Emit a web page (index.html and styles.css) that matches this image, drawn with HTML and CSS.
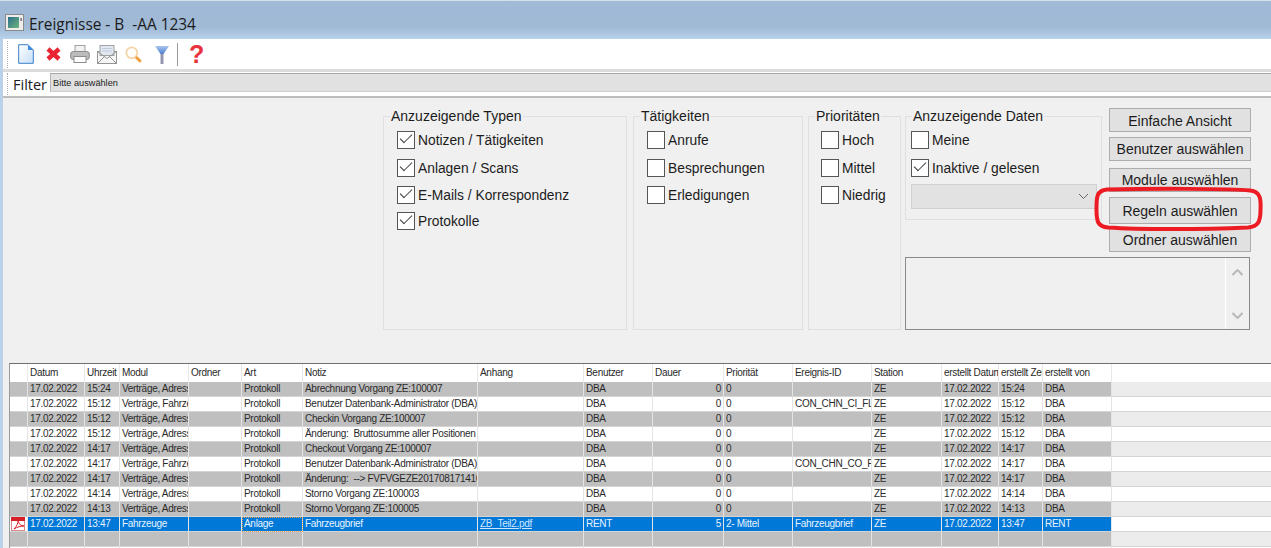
FILE: index.html
```html
<!DOCTYPE html>
<html lang="de">
<head>
<meta charset="utf-8">
<title>Ereignisse</title>
<link rel="stylesheet" href="styles.css">
</head>
<body>
<div class="app">
  <header class="titlebar">
    <svg class="title-icon" width="19" height="17" viewBox="0 0 19 17"><defs><linearGradient id="tg" x1="0" y1="0" x2="1" y2="1"><stop offset="0" stop-color="#2b6f8c"/><stop offset="1" stop-color="#6fb57a"/></linearGradient></defs><rect x=".5" y=".5" width="18" height="16" fill="#ececec" stroke="#8a8a8a"/><rect x="3" y="3" width="11" height="11" fill="url(#tg)"/><rect x="15.500" y="4" width="1.200" height="3" fill="#556"/></svg>
    <h1 class="title">Ereignisse - B  -AA 1234</h1>
  </header>
  <div class="content">
    <div class="toolbar">
      <span class="grip"></span>
      <svg class="ic-doc" width="16" height="20" viewBox="0 0 16 20"><defs><linearGradient id="dg" x1="0" y1="0" x2="1" y2="1"><stop offset="0" stop-color="#fff"/><stop offset="1" stop-color="#c6def6"/></linearGradient></defs><path d="M.7.7H10L15.3 6V19.3H.7Z" fill="url(#dg)" stroke="#3a80c8"/><path d="M10 .7V6H15.3Z" fill="#3d8ae0"/></svg>
      <svg class="ic-x" width="15" height="14" viewBox="0 0 15 14"><path d="M2 2L13 12M13 2L2 12" stroke="#ea2430" stroke-width="4.400" fill="none"/></svg>
      <svg class="ic-print" width="20" height="18" viewBox="0 0 20 18"><rect x="5" y=".5" width="10" height="8" fill="#f2f2f2" stroke="#a0a0a0"/><rect x=".7" y="6.500" width="18.600" height="8" rx="2.500" fill="#bcbcbc" stroke="#8c8c8c"/><rect x="4" y="11.500" width="12" height="6" fill="#fff" stroke="#8c8c8c"/></svg>
      <svg class="ic-mail" width="20" height="19" viewBox="0 0 20 19"><rect x=".5" y="6.500" width="19" height="12" fill="#f6f6f6" stroke="#959595"/><rect x="3" y=".5" width="14" height="10" fill="#e2e8f1" stroke="#a2a2a2"/><path d="M5 3.500H15M5 6H15" stroke="#c0cbda"/><path d="M.5 6.500L10 13.500L19.500 6.500M.5 18.500L7.500 11.500M19.500 18.500L12.500 11.500" stroke="#959595" fill="none"/></svg>
      <svg class="ic-mag" width="17" height="17" viewBox="0 0 17 17"><circle cx="6.800" cy="6.800" r="5.500" fill="#fffefb" stroke="#f4d5a8" stroke-width="1.800"/><path d="M11 11L15.800 15.800" stroke="#ec9f3c" stroke-width="3"/></svg>
      <svg class="ic-fun" width="14" height="19" viewBox="0 0 14 19"><defs><linearGradient id="fg" x1="0" y1="0" x2="0" y2="1"><stop offset="0" stop-color="#a9c6ee"/><stop offset="1" stop-color="#4f7fcf"/></linearGradient></defs><path d="M5.500 8H8.500V19H5.500Z" fill="#9497ad"/><path d="M0 1H14L8.500 9H5.500Z" fill="url(#fg)"/></svg>
      <span class="tool-sep"></span>
      <span class="ic-help">?</span>
    </div>
    <div class="filterbar">
      <span class="grip grip-short"></span>
      <span class="filter-label">Filter</span>
      <div class="filter-combo">Bitte auswählen</div>
    </div>
    <main class="panel">
      <fieldset class="group g-types">
        <legend>Anzuzeigende Typen</legend>
        <div class="checks">
          <label class="check"><span class="box on"></span>Notizen / Tätigkeiten</label>
          <label class="check"><span class="box on"></span>Anlagen / Scans</label>
          <label class="check"><span class="box on"></span>E-Mails / Korrespondenz</label>
          <label class="check"><span class="box on"></span>Protokolle</label>
        </div>
      </fieldset>
      <fieldset class="group g-tasks">
        <legend>Tätigkeiten</legend>
        <div class="checks">
          <label class="check"><span class="box"></span>Anrufe</label>
          <label class="check"><span class="box"></span>Besprechungen</label>
          <label class="check"><span class="box"></span>Erledigungen</label>
        </div>
      </fieldset>
      <fieldset class="group g-prio">
        <legend>Prioritäten</legend>
        <div class="checks">
          <label class="check"><span class="box"></span>Hoch</label>
          <label class="check"><span class="box"></span>Mittel</label>
          <label class="check"><span class="box"></span>Niedrig</label>
        </div>
      </fieldset>
      <div class="right">
        <div class="right-top">
          <fieldset class="group g-data">
            <legend>Anzuzeigende Daten</legend>
            <div class="checks">
              <label class="check"><span class="box"></span>Meine</label>
              <label class="check"><span class="box on"></span>Inaktive / gelesen</label>
            </div>
            <div class="select"><svg width="11" height="7" viewBox="0 0 11 7"><path d="M1 1L5.500 5.500L10 1" stroke="#666" fill="none"/></svg></div>
          </fieldset>
          <div class="buttons">
            <button class="btn b1">Einfache Ansicht</button>
            <button class="btn b2">Benutzer auswählen</button>
            <button class="btn b3">Module auswählen</button>
            <button class="btn b4">Regeln auswählen</button>
            <button class="btn b5">Ordner auswählen</button>
            <svg class="oval" width="172" height="46" viewBox="0 0 172 46"><path d="M14 3.500C57 2.500 137 2.500 157 4.500C168 5.500 168 14 167.500 24C167.500 36 165 40.500 155 41.500C107 43.500 47 43.500 15 41.500C5 40.500 3.500 36 3.500 24C3.500 12 3 4.500 14 3.500Z" fill="none" stroke="#ed1c24" stroke-width="4"/></svg>
          </div>
        </div>
        <div class="memo">
          <div class="memo-scroll">
            <svg width="11" height="7" viewBox="0 0 11 7"><path d="M.5 6L5.500 1L10.500 6" stroke="#b8b8b8" stroke-width="2" fill="none"/></svg>
            <svg width="11" height="7" viewBox="0 0 11 7"><path d="M.5 1L5.500 6L10.500 1" stroke="#b8b8b8" stroke-width="2" fill="none"/></svg>
          </div>
        </div>
      </div>
    </main>
    <div class="grid-wrap">
      <table class="grid">
        <colgroup>
          <col class="w18"><col class="w57"><col class="w35"><col class="w69"><col class="w53"><col class="w61"><col class="w175"><col class="w106"><col class="w69"><col class="w71"><col class="w69"><col class="w79"><col class="w70"><col class="w57"><col class="w44"><col class="w69"><col>
        </colgroup>
        <thead>
          <tr><th></th><th>Datum</th><th>Uhrzeit</th><th>Modul</th><th>Ordner</th><th>Art</th><th>Notiz</th><th>Anhang</th><th>Benutzer</th><th>Dauer</th><th>Priorität</th><th>Ereignis-ID</th><th>Station</th><th>erstellt Datum</th><th>erstellt Zeit</th><th>erstellt von</th><th></th></tr>
        </thead>
        <tbody>
          <tr class="dark"><td></td><td>17.02.2022</td><td>15:24</td><td>Verträge, Adressen</td><td></td><td>Protokoll</td><td>Abrechnung Vorgang ZE:100007</td><td></td><td>DBA</td><td class="num">0</td><td>0</td><td></td><td>ZE</td><td>17.02.2022</td><td>15:24</td><td>DBA</td><td class="fill"></td></tr>
          <tr class="light"><td></td><td>17.02.2022</td><td>15:12</td><td>Verträge, Fahrzeuge</td><td></td><td>Protokoll</td><td>Benutzer Datenbank-Administrator (DBA) hat</td><td></td><td>DBA</td><td class="num">0</td><td>0</td><td>CON_CHN_CI_FL</td><td>ZE</td><td>17.02.2022</td><td>15:12</td><td>DBA</td><td class="fill"></td></tr>
          <tr class="dark"><td></td><td>17.02.2022</td><td>15:12</td><td>Verträge, Adressen</td><td></td><td>Protokoll</td><td>Checkin Vorgang ZE:100007</td><td></td><td>DBA</td><td class="num">0</td><td>0</td><td></td><td>ZE</td><td>17.02.2022</td><td>15:12</td><td>DBA</td><td class="fill"></td></tr>
          <tr class="light"><td></td><td>17.02.2022</td><td>15:12</td><td>Verträge, Adressen</td><td></td><td>Protokoll</td><td>Änderung:  Bruttosumme aller Positionen und</td><td></td><td>DBA</td><td class="num">0</td><td>0</td><td></td><td>ZE</td><td>17.02.2022</td><td>15:12</td><td>DBA</td><td class="fill"></td></tr>
          <tr class="dark"><td></td><td>17.02.2022</td><td>14:17</td><td>Verträge, Adressen</td><td></td><td>Protokoll</td><td>Checkout Vorgang ZE:100007</td><td></td><td>DBA</td><td class="num">0</td><td>0</td><td></td><td>ZE</td><td>17.02.2022</td><td>14:17</td><td>DBA</td><td class="fill"></td></tr>
          <tr class="light"><td></td><td>17.02.2022</td><td>14:17</td><td>Verträge, Fahrzeuge</td><td></td><td>Protokoll</td><td>Benutzer Datenbank-Administrator (DBA) hat</td><td></td><td>DBA</td><td class="num">0</td><td>0</td><td>CON_CHN_CO_F</td><td>ZE</td><td>17.02.2022</td><td>14:17</td><td>DBA</td><td class="fill"></td></tr>
          <tr class="dark"><td></td><td>17.02.2022</td><td>14:17</td><td>Verträge, Adressen</td><td></td><td>Protokoll</td><td>Änderung:  --&gt; FVFVGEZE20170817141612</td><td></td><td>DBA</td><td class="num">0</td><td>0</td><td></td><td>ZE</td><td>17.02.2022</td><td>14:17</td><td>DBA</td><td class="fill"></td></tr>
          <tr class="light"><td></td><td>17.02.2022</td><td>14:14</td><td>Verträge, Adressen</td><td></td><td>Protokoll</td><td>Storno Vorgang ZE:100003</td><td></td><td>DBA</td><td class="num">0</td><td>0</td><td></td><td>ZE</td><td>17.02.2022</td><td>14:14</td><td>DBA</td><td class="fill"></td></tr>
          <tr class="dark"><td></td><td>17.02.2022</td><td>14:13</td><td>Verträge, Adressen</td><td></td><td>Protokoll</td><td>Storno Vorgang ZE:100005</td><td></td><td>DBA</td><td class="num">0</td><td>0</td><td></td><td>ZE</td><td>17.02.2022</td><td>14:13</td><td>DBA</td><td class="fill"></td></tr>
          <tr class="selected"><td class="rowhead"><svg class="pdf" width="15" height="14" viewBox="0 0 15 14"><rect x=".5" y=".5" width="13" height="13" fill="#fff" stroke="#d88"/><rect x="0" y="0" width="14" height="4" fill="#d8202a"/><path d="M3 12C6 9 7 6 7 4C8 7 10 9 13 9C10 9 6 10 3 12Z" fill="none" stroke="#d8202a"/></svg></td><td>17.02.2022</td><td>13:47</td><td>Fahrzeuge</td><td></td><td class="focus">Anlage</td><td>Fahrzeugbrief</td><td class="link">ZB_Teil2.pdf</td><td>RENT</td><td class="num">5</td><td>2- Mittel</td><td>Fahrzeugbrief</td><td>ZE</td><td>17.02.2022</td><td>13:47</td><td>RENT</td><td class="fill"></td></tr>
          <tr class="dark"><td></td><td></td><td></td><td></td><td></td><td></td><td></td><td></td><td></td><td></td><td></td><td></td><td></td><td></td><td></td><td></td><td class="fill"></td></tr>
          <tr class="light"><td></td><td></td><td></td><td></td><td></td><td></td><td></td><td></td><td></td><td></td><td></td><td></td><td></td><td></td><td></td><td></td><td class="fill"></td></tr>
        </tbody>
      </table>
    </div>
  </div>
</div>
</body>
</html>
```
FILE: styles.css
```css
html, body { margin: 0; padding: 0; height: 548px; overflow: hidden; background: #f0f0f0; }
body { font-family: "Liberation Sans", Arial, sans-serif; color: #1c1c1c; }
.app { display: flex; flex-direction: column; height: 548px; overflow: hidden; }

.titlebar { height: 39px; box-sizing: border-box; border-top: 1px solid #d6e0ec; background: linear-gradient(#a0bad7 0, #a0b9d5 70%, #bad3ec 100%); display: flex; align-items: flex-end; padding: 0 0 8px 5px; }
.title-icon { display: block; }
.title { margin: 0 0 -3px 5px; font: 400 15.400px/18px "Open Sans", sans-serif; color: #1b1b1b; white-space: pre; }

.content { flex: 1; border-left: 3px solid #b9d2ea; display: flex; flex-direction: column; min-height: 0; }

.toolbar { height: 33px; box-sizing: border-box; background: #fff; border-bottom: 3px solid #dcdcdc; display: flex; align-items: center; }
.grip { width: 1px; height: 27px; margin-left: 4px; border-left: 1px dotted #aaa; }
.grip-short { height: 22px; }
.toolbar svg { display: block; flex: none; }
.ic-doc { margin-left: 9px; margin-top: -1px; }
.ic-x { margin-left: 12px; }
.ic-print { margin-left: 9px; }
.ic-mail { margin-left: 7px; }
.ic-mag { margin-left: 8px; }
.ic-fun { margin-left: 13px; }
.tool-sep { width: 1px; height: 23px; margin-left: 8px; background: #9a9a9a; }
.ic-help { margin-left: 11px; font: 700 25px/24px "Liberation Sans", sans-serif; color: #e8323e; }

.filterbar { height: 26px; box-sizing: border-box; background: #fff; border-bottom: 2px solid #bdbdbd; display: flex; align-items: flex-start; padding-top: 1px; }
.filter-label { margin-left: 4px; font: 400 14.500px/24px "Open Sans", sans-serif; width: 37px; }
.filter-combo { flex: 1; height: 19px; box-sizing: border-box; background: #e1e1e1; border-top: 1px solid #a8a8a8; border-bottom: 1px solid #cdcdcd; border-left: 1px solid #b4b4b4; font-size: 9.200px; line-height: 18px; padding-left: 2px; }

.panel { height: 265px; box-sizing: border-box; padding: 10px 0 0 380px; display: flex; align-items: flex-start; flex: none; }
.group { margin: 0; padding: 0; border: 1px solid #dfdfdf; box-sizing: border-box; height: 222px; min-width: 0; }
.group legend { margin-left: 6px; padding: 0 1px; font-size: 14px; line-height: 16px; height: 16px; }
.g-types { width: 244px; }
.g-tasks { width: 170px; margin-left: 6px; }
.g-prio { width: 93px; margin-left: 5px; }
.right { margin-left: 4px; width: 346px; }
.right-top { display: flex; align-items: flex-start; }
.g-data { width: 197px; height: 112px; }

.checks { display: flex; flex-direction: column; gap: 8px; padding: 7px 0 0 13px; }
.g-prio .checks { padding-left: 12px; }
.g-data .checks { padding-left: 5px; }
.check { display: flex; align-items: flex-start; height: 18px; font-size: 13.800px; line-height: 20px; white-space: nowrap; }
.check:nth-child(1) { margin-bottom: 2px; }
.check:nth-child(2) { margin-bottom: 1px; }
.box { width: 18px; height: 18px; box-sizing: border-box; border: 1px solid #555; background: #fff; margin-right: 3px; flex: none; position: relative; }
.box.on::after { content: ""; position: absolute; left: 3px; top: 2px; width: 9px; height: 5px; border-left: 1.400px solid #444; border-bottom: 1.400px solid #444; transform: rotate(-45deg) scaleX(1.200); }
.select { margin: 6px 0 0 5px; width: 186px; height: 25px; box-sizing: border-box; background: #e2e2e2; border: 1px solid #d0d0d0; display: flex; align-items: center; justify-content: flex-end; padding-right: 7px; }

.buttons { position: relative; margin-left: 7px; width: 142px; height: 144px; flex: none; display: flex; flex-direction: column; }
.btn { display: block; width: 142px; height: 24px; box-sizing: border-box; background: #e1e1e1; border: 1px solid #adadad; border-radius: 0; padding: 0; font: 14px/20px "Liberation Sans", sans-serif; color: #1c1c1c; }
.b1 { padding-top: 2px; }
.b2 { margin-top: 5px; }
.b3 { margin-top: 7px; }
.b4 { margin-top: 5px; height: 27px; }
.b5 { margin-top: 4px; }
.oval { position: absolute; left: -16px; top: 78px; }

.memo { margin-top: 5px; width: 345px; height: 73px; box-sizing: border-box; border: 1px solid #8a8a8a; background: #f0f0f0; display: flex; justify-content: flex-end; }
.memo-scroll { width: 24px; border-left: 1px solid #fff; display: flex; flex-direction: column; justify-content: space-between; align-items: center; padding: 11px 0 10px; box-sizing: border-box; }
.memo-scroll svg { display: block; }

.grid-wrap { margin-left: 6px; border-top: 1px solid #6f6f6f; border-left: 1px solid #9a9a9a; background: #fff; flex: 1; min-height: 0; overflow: hidden; }
.grid { width: 100%; table-layout: fixed; border-collapse: separate; border-spacing: 0; font-size: 10px; letter-spacing: -.3px; color: #2a2a2a; }
.w18 { width: 18px; } .w57 { width: 57px; } .w35 { width: 35px; } .w69 { width: 69px; } .w53 { width: 53px; } .w61 { width: 61px; } .w175 { width: 175px; } .w106 { width: 106px; } .w71 { width: 71px; } .w79 { width: 79px; } .w70 { width: 70px; } .w44 { width: 44px; }
.grid th { height: 18px; box-sizing: border-box; padding: 0 0 2px 2px; font-weight: 400; text-align: left; background: #fff; border-right: 1px solid #e8e8e8; overflow: hidden; white-space: nowrap; }
.grid td { height: 15px; box-sizing: border-box; padding: 0 0 0 2px; border-right: 1px solid #e4e4e4; border-bottom: 1px solid #d4d4d4; overflow: hidden; white-space: pre; line-height: 14px; }
.grid td.num { text-align: right; padding-right: 2px; }
.dark td { background: #bfbfbf; }
.light td { background: #fff; }
.dark td.fill { background: #ececec; border-right: 0; }
.light td.fill { background: #fff; border-right: 0; }
.grid th:last-child { border-right: 0; }
.selected td { background: #0078d7; color: #eaf4ff; }
.selected td.fill { background: #fff; border-right: 0; }
.selected td.rowhead { background: #fff; padding: 0 0 0 1px; }
.pdf { display: block; }
.selected td.focus { outline: 1px dotted #e8a24a; outline-offset: -1px; }
.selected td.link { text-decoration: underline; color: #cfe6ff; }
```
